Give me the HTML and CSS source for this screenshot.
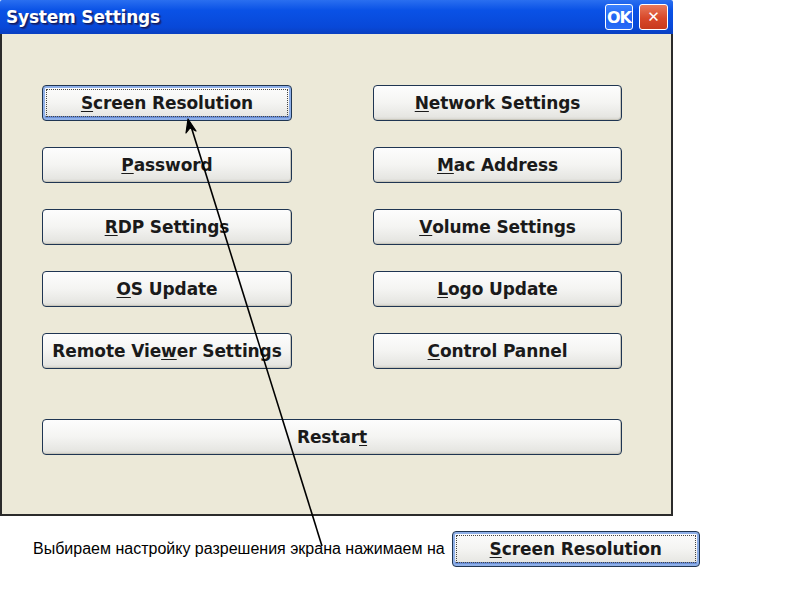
FILE: index.html
```html
<!DOCTYPE html>
<html lang="en">
<head>
    <meta charset="UTF-8">
    <title>System Settings</title>
    <link rel="stylesheet" href="styles.css">
</head>
<body>
    <div class="page">
        <div class="window">
            <div class="title-bar">
                <span class="title">System Settings</span>
                <div class="title-buttons">
                    <span class="tb-btn tb-ok">OK</span>
                    <span class="tb-btn tb-close">&#x2715;</span>
                </div>
            </div>
            <div class="window-body">
                <div class="btn-grid">
                    <button class="xp-btn focused"><span class="focus-ring"><u>S</u>creen Resolution</span></button>
                    <button class="xp-btn"><u>N</u>etwork Settings</button>
                    <button class="xp-btn"><u>P</u>assword</button>
                    <button class="xp-btn"><u>M</u>ac Address</button>
                    <button class="xp-btn"><u>R</u>DP Settings</button>
                    <button class="xp-btn"><u>V</u>olume Settings</button>
                    <button class="xp-btn"><u>O</u>S Update</button>
                    <button class="xp-btn"><u>L</u>ogo Update</button>
                    <button class="xp-btn">Remote Vie<u>w</u>er Settings</button>
                    <button class="xp-btn"><u>C</u>ontrol Pannel</button>
                    <button class="xp-btn wide">Restar<u>t</u></button>
                </div>
            </div>
        </div>

        <div class="caption">
            <span class="caption-text">Выбираем настройку разрешения экрана нажимаем на</span>
            <button class="xp-btn focused small"><span class="focus-ring"><u>S</u>creen Resolution</span></button>
        </div>

        <!-- pointer from the caption up to the button -->
        <svg class="pointer" width="800" height="600" viewBox="0 0 800 600">
            <line x1="322" y1="546" x2="190" y2="123" stroke="#000" stroke-width="1.6"/>
            <path d="M188 119 L186 133 L190 128 L196 131 Z" fill="#000" stroke="#000" stroke-width="1.2" stroke-linejoin="round"/>
        </svg>
    </div>
</body>
</html>
```

FILE: styles.css
```css
body{
    margin: 0;
    background: #fff;
    font-family: "DejaVu Sans", Verdana, sans-serif;
}
.page{
    position: relative;
    width: 800px;
    height: 600px;
}
.window{
    width: 673px;
    display: flex;
    flex-direction: column;
}
.title-bar{
    height: 34px;
    background: linear-gradient(#2a6ff0, #0a52e6 30%, #0848d8 80%, #0a3fc0);
    display: flex;
    align-items: center;
    justify-content: space-between;
    padding: 0 5px 0 6px;
    border-radius: 2px 2px 0 0;
}
.title{
    color: #fff;
    font-weight: bold;
    font-size: 17px;
    letter-spacing: -0.2px;
    text-shadow: 1px 1px 0 #0a1d6a, 2px 2px 1px #1a2a80;
}
.title-buttons{
    display: flex;
    gap: 6px;
}
.tb-btn{
    width: 28px;
    height: 26px;
    border: 1px solid #fff;
    border-radius: 3px;
    color: #fff;
    font-weight: bold;
    display: flex;
    align-items: center;
    justify-content: center;
    box-sizing: border-box;
}
.tb-ok{
    background: linear-gradient(#3b82ff, #1d5ff0 60%, #2a6ef8);
    font-size: 16px;
    letter-spacing: -1px;
}
.tb-close{
    background: linear-gradient(#e87a5c, #d8482a 55%, #c83a1e);
    font-size: 15px;
    width: 29px;
}
.window-body{
    box-sizing: border-box;
    background: #ece9d8;
    border: 2px solid #2b2b2b;
    border-top: none;
    height: 482px;
    padding: 51px 0 0 40px;
}
.btn-grid{
    display: grid;
    grid-template-columns: 250px 249px;
    column-gap: 81px;
    row-gap: 26px;
}
.xp-btn{
    height: 36px;
    border: 1px solid #1f3552;
    border-radius: 4px;
    background: linear-gradient(#fdfdfd, #f4f4f2 50%, #e6e6e2 90%, #d6d5cf);
    font-family: "DejaVu Sans", Verdana, sans-serif;
    font-weight: bold;
    font-size: 17px;
    letter-spacing: -0.1px;
    color: #1a1a1a;
    padding: 0;
    display: flex;
    align-items: center;
    justify-content: center;
    box-shadow: inset -1px -1px 0 #c9c7bc;
    white-space: nowrap;
}
.xp-btn u{
    text-decoration-thickness: 1px;
    text-underline-offset: 2px;
}
.xp-btn.wide{
    grid-column: 1 / 3;
    margin-top: 24px;
}
.xp-btn.focused{
    box-shadow: inset 0 0 0 2px #8fb0e8, inset 0 -2px 0 2px #6a8fd8;
    padding: 3px;
}
.focus-ring{
    flex: 1;
    align-self: stretch;
    display: flex;
    align-items: center;
    justify-content: center;
    border: 1px dotted #444;
}
.caption{
    display: flex;
    align-items: center;
    gap: 7px;
    padding: 15px 0 0 33px;
}
.caption-text{
    font-family: "Liberation Sans", Arial, sans-serif;
    font-size: 16px;
    color: #000;
}
.xp-btn.small{
    width: 248px;
    flex: none;
}
.pointer{
    position: absolute;
    left: 0;
    top: 0;
    pointer-events: none;
}
```
